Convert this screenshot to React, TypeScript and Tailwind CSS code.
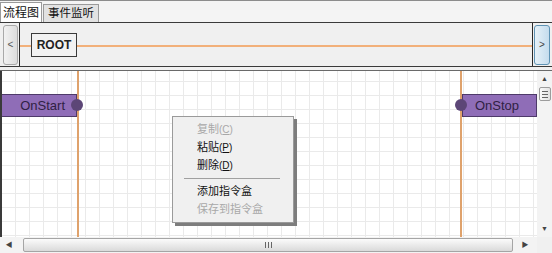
const font = "font-['Liberation_Sans','Noto_Sans_CJK_SC',sans-serif]"

function MenuItem({ label, hot, disabled }: { label: string; hot: string; disabled?: boolean }) {
  return (
    <div className={`h-[18px] flex items-center pl-[24px] ${disabled ? "text-[#a8a8a8]" : "text-[#111]"}`}>
      {label}
      {hot && (
        <span className="text-[10px]">
          (<span className="underline">{hot}</span>)
        </span>
      )}
    </div>
  )
}

function EventNode({ label, side }: { label: string; side: "left" | "right" }) {
  const left = side === "left"
  return (
    <div className={`absolute top-[23px] h-[23px] flex items-center ${left ? "left-0 w-[75px] justify-end pr-[11px] border-l-0" : "left-[460px] w-[75px] pl-[12px]"} bg-[#8f6db7] border border-[#4e3a69] text-[13px] text-[#2f2143]`}>
      {label}
      <span className={`absolute top-[4px] w-[12px] h-[12px] rounded-full bg-[#5c4677] ${left ? "-right-[7px]" : "-left-[8px]"}`} />
    </div>
  )
}

export default function App() {
  return (
    <div className={`w-[552px] h-[253px] overflow-hidden bg-[#f0f0f0] flex flex-col ${font}`}>
      {/* tabs */}
      <div className="h-[22px] flex items-end border-t border-[#8c8c8c] bg-[#f4f4f4]">
        <div className="h-[20px] px-[2px] flex items-center bg-white border border-b-0 border-[#9a9a9a] text-[12px] text-[#111]">
          流程图
        </div>
        <div className="h-[18px] ml-[1px] px-[4px] flex items-center bg-[#e2e2e2] border border-b-0 border-[#9a9a9a] text-[11.5px] text-[#111]">
          事件监听
        </div>
      </div>

      {/* breadcrumb strip */}
      <div className="h-[45px] flex border-t border-b border-[#3a3a3a] bg-[#f0f0f0]">
        <div className="w-[19px] flex items-center justify-center py-[1px] pl-[2px]">
          <div className="w-[15px] h-[40px] rounded-[3px] border border-[#a9a9a9] bg-[linear-gradient(to_right,#f2f2f2,#dcdcdc)] flex items-center justify-center text-[10px] text-[#555]">
            &lt;
          </div>
        </div>
        <div className="flex-1 relative border-l border-r border-[#2a2a2a] flex items-center">
          <div className="absolute left-0 right-0 top-[22px] h-[2px] bg-[#f2b07a]" />
          <div className="relative ml-[11px] w-[46px] h-[24px] border border-[#3a3a3a] bg-[#f2f2f2] flex items-center justify-center text-[12px] font-bold text-[#222]">
            ROOT
          </div>
        </div>
        <div className="w-[19px] flex items-center pl-[1px]">
          <div className="w-[16px] h-[40px] rounded-[3px] border border-[#5f93b4] bg-[linear-gradient(to_right,#e6f1f8,#c5dced)] flex items-center justify-center text-[10px] text-[#444]">
            &gt;
          </div>
        </div>
      </div>

      <div className="h-[3px]" />

      {/* canvas + scrollbars */}
      <div className="flex-1 flex flex-col border-t border-[#6a6a6a]">
        <div className="flex-1 flex">
          <div className="flex-1 relative border-l-2 border-[#3a3a3a] bg-white bg-[linear-gradient(to_right,#eaeaea_1px,transparent_1px),linear-gradient(to_bottom,#eaeaea_1px,transparent_1px)] bg-[size:14px_14px] bg-[position:13px_10px]">
            <div className="absolute top-0 bottom-0 left-[75px] w-[2px] bg-[#dfa26c]" />
            <div className="absolute top-0 bottom-0 left-[458px] w-[2px] bg-[#dfa26c]" />
            <EventNode label="OnStart" side="left" />
            <EventNode label="OnStop" side="right" />

            {/* context menu */}
            <div className="absolute left-[170px] top-[45px] w-[122px] pt-[3px] pb-[4px] bg-[#f0f0f0] border border-[#9a9a9a] shadow-[3px_3px_0_#7d7d7d] text-[11px]">
              <MenuItem label="复制" hot="C" disabled />
              <MenuItem label="粘贴" hot="P" />
              <MenuItem label="删除" hot="D" />
              <div className="h-[8px] flex items-center pl-[11px] pr-[13px]">
                <div className="h-px w-full bg-[#a0a0a0]" />
              </div>
              <MenuItem label="添加指令盒" hot="" />
              <MenuItem label="保存到指令盒" hot="" disabled />
            </div>
          </div>

          {/* vertical scrollbar */}
          <div className="w-[15px] bg-[#f3f3f3] flex flex-col items-center">
            <div className="h-[16px] flex items-center justify-center text-[7px] text-[#444]">▲</div>
            <div className="w-[12px] h-[14px] rounded-[2px] border border-[#9c9c9c] bg-[linear-gradient(to_right,#fafafa,#e2e2e2)] flex flex-col items-center justify-center gap-[2px]">
              <div className="w-[6px] h-px bg-[#666]" />
              <div className="w-[6px] h-px bg-[#666]" />
              <div className="w-[6px] h-px bg-[#666]" />
            </div>
            <div className="flex-1" />
            <div className="h-[16px] flex items-center justify-center text-[7px] text-[#444]">▼</div>
          </div>
        </div>

        {/* horizontal scrollbar */}
        <div className="h-[16px] flex bg-[#f3f3f3]">
          <div className="w-[18px] flex items-center justify-center text-[7px] text-[#444]">◀</div>
          <div className="w-[5px]" />
          <div className="w-[490px] my-[1px] rounded-[2px] border border-[#a5a5a5] bg-[linear-gradient(to_bottom,#fbfbfb,#dadada)] flex items-center justify-center gap-[2px]">
            <div className="w-px h-[6px] bg-[#666]" />
            <div className="w-px h-[6px] bg-[#666]" />
            <div className="w-px h-[6px] bg-[#666]" />
          </div>
          <div className="w-[24px] flex items-center justify-center text-[7px] text-[#444]">▶</div>
          <div className="flex-1 bg-[#f0f0f0]" />
        </div>
      </div>
    </div>
  )
}
